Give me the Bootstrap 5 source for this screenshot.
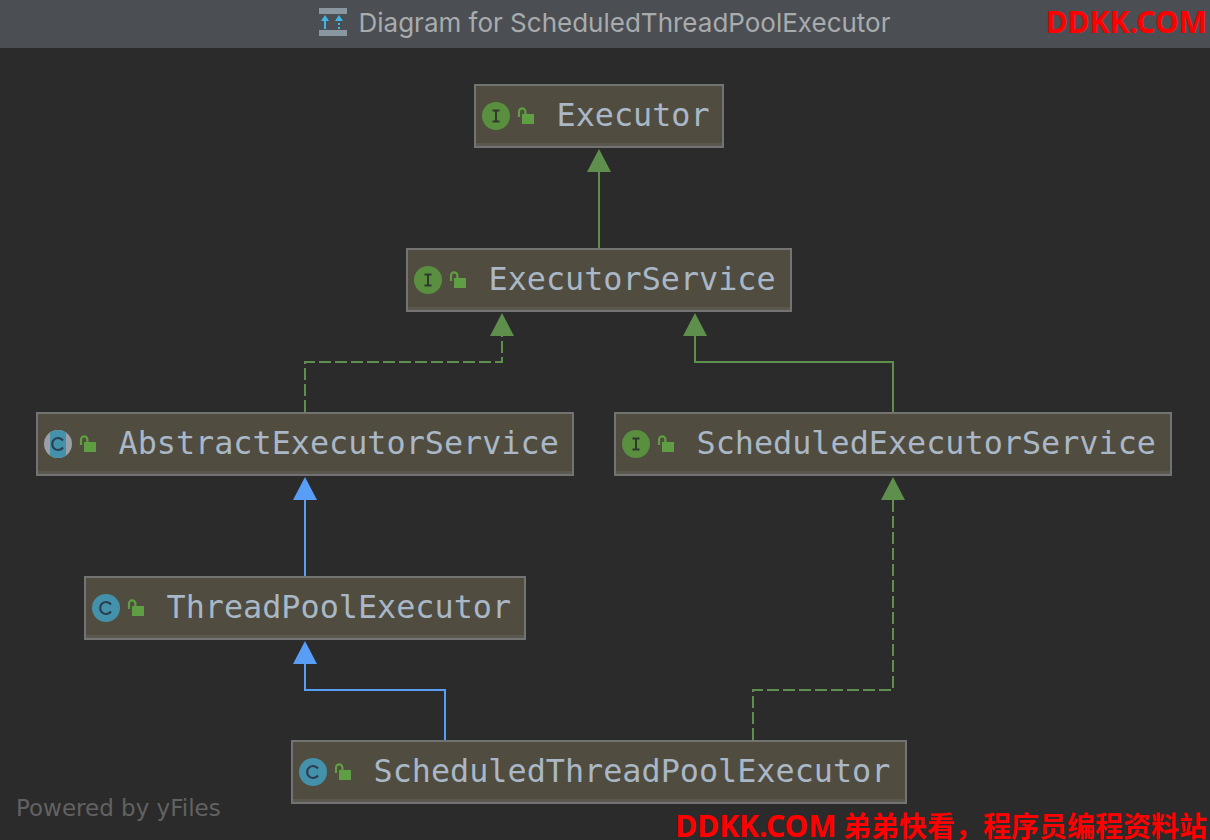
<!DOCTYPE html>
<html lang="en">
<head>
<meta charset="utf-8">
<title>Diagram for ScheduledThreadPoolExecutor</title>
<link href="https://cdn.jsdelivr.net/npm/bootstrap@5.3.0/dist/css/bootstrap.min.css" rel="stylesheet">
<style>
html,body{height:100%;margin:0;background:#2b2b2b;overflow:hidden}
.shell{width:1210px;height:840px;background:#2b2b2b}
.titlebar{height:48px;padding-bottom:2px;background:#4b4f54;color:#a9abad;font:26px/46px Inter,"Liberation Sans",sans-serif;gap:11px}
.title-ico{margin-bottom:2px}
.canvas-area{position:relative;height:792px}
.edges{position:absolute;left:0;top:0}
.uml{position:absolute;height:64px;background:#504c40;border:2px solid #737373;box-shadow:inset 0 -3px 0 #5b594f;padding-left:6px;padding-bottom:2px;color:#a9b7c6;font:31.8px/56px "DejaVu Sans Mono",monospace;white-space:nowrap}
.n1{left:474px;top:36px;width:250px}
.n2{left:406px;top:200px;width:386px}
.n3{left:36px;top:364px;width:538px}
.n4{left:614px;top:364px;width:558px}
.n5{left:84px;top:528px;width:442px}
.n6{left:291px;top:692px;width:616px}
.uicon{width:54px;height:30px;margin-right:20.500px;flex:none;position:relative;top:1px}
.powered{position:absolute;left:16px;top:746px;color:#626262;font:23px/28px "DejaVu Sans",sans-serif}
.stamp{position:absolute;color:#f00;font:700 28px/28px "Noto Sans CJK SC","Noto Sans",sans-serif;white-space:nowrap}
.stamp-latin{font:700 30px/28px "Noto Sans","Noto Sans CJK SC",sans-serif}
.stamp-top{right:3px;top:7px}
.stamp-bottom{right:3px;top:763px}
</style>
</head>
<body>
<div class="shell position-relative">
  <header class="titlebar d-flex justify-content-center align-items-center">
    <svg class="title-ico" width="28" height="28" viewBox="0 0 28 28">
      <rect width="28" height="6" fill="#8a96a0"/><rect y="22" width="28" height="6" fill="#8a96a0"/>
      <path d="M6 11v10M20 11v2M20 15v2M20 19v2" stroke="#3fb6e6" stroke-width="2"/>
      <path d="M2 13l4-6 4 6zM16 13l4-6 4 6z" fill="#3fb6e6"/>
    </svg>
    <span>Diagram for ScheduledThreadPoolExecutor</span>
  </header>
  <main class="canvas-area">
    <svg class="edges" width="1210" height="792" viewBox="0 48 1210 792" fill="none" stroke-width="2">
      <g stroke="#5f8f4d">
        <path d="M599 172V248"/>
        <path d="M893 412V362H695V336"/>
        <path d="M305 412V362H502V336" stroke-dasharray="12 4"/>
        <path d="M753 740V690H893V500" stroke-dasharray="12 4"/>
      </g>
      <g stroke="#589df6">
        <path d="M305 576V500"/>
        <path d="M445 740V690H305V664"/>
      </g>
      <g fill="#5f8f4d">
        <path d="M599 149L611 172H587Z"/>
        <path d="M502 313L514 336H490Z"/>
        <path d="M695 313L707 336H683Z"/>
        <path d="M893 477L905 500H881Z"/>
      </g>
      <g fill="#589df6">
        <path d="M305 477L317 500H293Z"/>
        <path d="M305 641L317 664H293Z"/>
      </g>
    </svg>

    <div class="uml n1 d-flex align-items-center">
      <svg class="uicon" viewBox="0 0 54 30"><use href="#ico-i"/></svg><span>Executor</span>
    </div>
    <div class="uml n2 d-flex align-items-center">
      <svg class="uicon" viewBox="0 0 54 30"><use href="#ico-i"/></svg><span>ExecutorService</span>
    </div>
    <div class="uml n3 d-flex align-items-center">
      <svg class="uicon" viewBox="0 0 54 30"><use href="#ico-a"/></svg><span>AbstractExecutorService</span>
    </div>
    <div class="uml n4 d-flex align-items-center">
      <svg class="uicon" viewBox="0 0 54 30"><use href="#ico-i"/></svg><span>ScheduledExecutorService</span>
    </div>
    <div class="uml n5 d-flex align-items-center">
      <svg class="uicon" viewBox="0 0 54 30"><use href="#ico-c"/></svg><span>ThreadPoolExecutor</span>
    </div>
    <div class="uml n6 d-flex align-items-center">
      <svg class="uicon" viewBox="0 0 54 30"><use href="#ico-c"/></svg><span>ScheduledThreadPoolExecutor</span>
    </div>

    <div class="powered">Powered by yFiles</div>
    <div class="stamp stamp-bottom"><span class="stamp-latin">DDKK.COM</span> 弟弟快看，程序员编程资料站</div>
  </main>
  <div class="stamp stamp-top"><span class="stamp-latin">DDKK.COM</span></div>
</div>

<svg width="0" height="0" class="position-absolute">
  <defs>
    <g id="lock">
      <path d="M37 16V10.500a3.200 3.200 0 0 1 6.400 0V13" fill="none" stroke="#5f9e43" stroke-width="2.200"/>
      <rect x="40" y="13" width="12" height="10" fill="#5f9e43"/>
    </g>
    <g id="ico-i">
      <circle cx="14" cy="15" r="14" fill="#5a8f40"/>
      <path d="M10.500 9.500h7M10.500 20.500h7M14 9.500v11" stroke="#2f3a2b" stroke-width="2" fill="none"/>
      <use href="#lock"/>
    </g>
    <g id="ico-c">
      <circle cx="14" cy="15" r="14" fill="#4391ab"/>
      <path d="M19 11.500a6 6 0 1 0 0 7" stroke="#2b3f52" stroke-width="2.200" fill="none"/>
      <use href="#lock"/>
    </g>
    <g id="ico-a">
      <circle cx="14" cy="15" r="14" fill="#9aa0a5"/>
      <path d="M6 3.500A14 14 0 0 1 22 3.500V26.500A14 14 0 0 1 6 26.500Z" fill="#4391ab"/>
      <path d="M19 11.500a6 6 0 1 0 0 7" stroke="#2b3f52" stroke-width="2.200" fill="none"/>
      <use href="#lock"/>
    </g>
  </defs>
</svg>
<script src="https://cdn.jsdelivr.net/npm/bootstrap@5.3.0/dist/js/bootstrap.bundle.min.js"></script>
</body>
</html>
